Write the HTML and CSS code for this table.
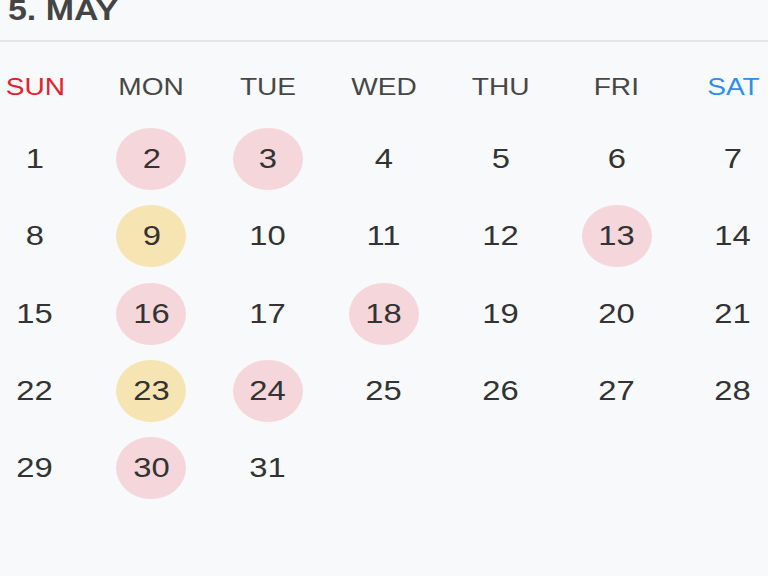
FILE: index.html
```html
<!DOCTYPE html>
<html lang="en">
<head>
    <meta charset="UTF-8">
    <meta name="viewport" content="width=device-width, initial-scale=1.0">
    <title>May Calendar</title>
    <link rel="stylesheet" href="styles.css">
</head>
<body>

<div class="header">
    <h1 class="title"><span class="wide">5. MAY</span></h1>
</div>

<!-- Weekday names -->
<div class="week">
    <div class="cell sun"><span class="wide">SUN</span></div>
    <div class="cell"><span class="wide">MON</span></div>
    <div class="cell"><span class="wide">TUE</span></div>
    <div class="cell"><span class="wide">WED</span></div>
    <div class="cell"><span class="wide">THU</span></div>
    <div class="cell"><span class="wide">FRI</span></div>
    <div class="cell sat"><span class="wide">SAT</span></div>
</div>

<!-- Days -->
<div class="days">
    <div class="day"><span class="wide">1</span></div>
    <div class="day pink"><span class="wide">2</span></div>
    <div class="day pink"><span class="wide">3</span></div>
    <div class="day"><span class="wide">4</span></div>
    <div class="day"><span class="wide">5</span></div>
    <div class="day"><span class="wide">6</span></div>
    <div class="day"><span class="wide">7</span></div>

    <div class="day"><span class="wide">8</span></div>
    <div class="day yellow"><span class="wide">9</span></div>
    <div class="day"><span class="wide">10</span></div>
    <div class="day"><span class="wide">11</span></div>
    <div class="day"><span class="wide">12</span></div>
    <div class="day pink"><span class="wide">13</span></div>
    <div class="day"><span class="wide">14</span></div>

    <div class="day"><span class="wide">15</span></div>
    <div class="day pink"><span class="wide">16</span></div>
    <div class="day"><span class="wide">17</span></div>
    <div class="day pink"><span class="wide">18</span></div>
    <div class="day"><span class="wide">19</span></div>
    <div class="day"><span class="wide">20</span></div>
    <div class="day"><span class="wide">21</span></div>

    <div class="day"><span class="wide">22</span></div>
    <div class="day yellow"><span class="wide">23</span></div>
    <div class="day pink"><span class="wide">24</span></div>
    <div class="day"><span class="wide">25</span></div>
    <div class="day"><span class="wide">26</span></div>
    <div class="day"><span class="wide">27</span></div>
    <div class="day"><span class="wide">28</span></div>

    <div class="day"><span class="wide">29</span></div>
    <div class="day pink"><span class="wide">30</span></div>
    <div class="day"><span class="wide">31</span></div>
</div>

</body>
</html>
```

FILE: styles.css
```css
body {
    font-family: 'Liberation Sans', Arial, sans-serif;
    margin: 0;
    padding: 0;
    background-color: #f8f9fb;
    color: #333;
    overflow: hidden;
}
.wide {
    display: inline-block;
    transform: scaleX(1.17);
}
.header {
    display: flex;
    height: 40px;
    border-bottom: 2px solid #e4e6e9;
    padding-left: 8px;
}
.title {
    margin: -4px 0 0 0;
    font-size: 29px;
    line-height: 29px;
    font-weight: bold;
    color: #444;
}
.title .wide {
    transform-origin: left center;
}
.week,
.days {
    display: grid;
    grid-template-columns: repeat(7, 70px);
    justify-content: space-between;
}
.week {
    margin-top: 14px;
    margin-bottom: 10px;
}
.days {
    row-gap: 15.25px;
}
.cell,
.day {
    height: 62px;
    display: flex;
    justify-content: center;
    align-items: center;
    line-height: 1;
}
.cell {
    font-size: 24px;
    color: #474747;
}
.sun {
    color: #e3232b;
}
.sat {
    color: #2c8ef0;
}
.day {
    font-size: 28px;
    color: #333;
    border-radius: 50%;
}
.pink {
    background-color: #f5d6db;
}
.yellow {
    background-color: #f6e4b2;
}
```
